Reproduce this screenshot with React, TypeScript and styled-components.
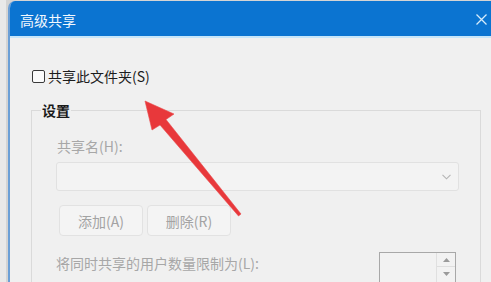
import React from "react";
import styled, { createGlobalStyle } from "styled-components";

const Global = createGlobalStyle`
  html, body { margin: 0; padding: 0; background: #e6e6e6; }
  body { width: 491px; height: 282px; overflow: hidden; }
  #root { width: 491px; height: 282px; }
  * { box-sizing: border-box; }
`;

const font = `"Noto Sans CJK SC", "Noto Sans", sans-serif`;

const Page = styled.div`
  position: relative;
  width: 491px;
  height: 282px;
  overflow: hidden;
  display: flex;
  padding: 1px 0 0 8px;
  background: linear-gradient(to right, #e9e9e9 0 6px, #d4d4d4 6px 8px);
  font-family: ${font};
`;

const Window = styled.div`
  flex: 1;
  margin-right: -20px;
  display: flex;
  flex-direction: column;
  border-left: 2px solid #6b9fd6;
  border-top-left-radius: 7px;
  overflow: hidden;
  background: #f0f0f0;
`;

const TitleBar = styled.div`
  height: 35px;
  flex: none;
  display: flex;
  align-items: center;
  justify-content: space-between;
  padding: 0 24px 0 10px;
  background: #0b74d1;
  border-bottom: 2px solid #c6e6fa;
  box-sizing: content-box;
`;

const Title = styled.span`
  color: #f2f8fe;
  font-size: 14px;
  line-height: 16px;
  margin-top: 2px;
`;

const Close = styled.svg`
  width: 11px;
  height: 11px;
  margin-top: 2px;
`;

const Body = styled.div`
  display: flex;
  flex-direction: column;
  padding: 30px 0 0 21px;
`;

const CheckRow = styled.label`
  display: flex;
  align-items: center;
  gap: 2px;
  padding-left: 1px;
  font-size: 14px;
  line-height: 16px;
  color: #1c1c1c;
`;

const Box = styled.span`
  width: 13px;
  height: 13px;
  border: 1px solid #3a3a3a;
  border-radius: 2px;
  background: #fbfbfb;
  margin-right: 1px;
`;

const Group = styled.div`
  position: relative;
  width: 450px;
  margin-top: 26px;
  border: 1px solid #dadada;
  border-bottom: none;
  padding: 27px 21px 0 24px;
  display: flex;
  flex-direction: column;
`;

const Legend = styled.span`
  position: absolute;
  top: -9px;
  left: 9px;
  padding: 0 1px;
  background: #f0f0f0;
  font-size: 14px;
  line-height: 16px;
  font-weight: 700;
  color: #1a1a1a;
`;

const Muted = styled.span<{ $indent?: number }>`
  font-size: 14px;
  line-height: 16px;
  color: #a7a7a7;
  padding-left: ${(p) => p.$indent ?? 0}px;
`;

const Combo = styled.div`
  margin-top: 8px;
  height: 29px;
  border: 1px solid #e1e1e1;
  border-radius: 3px;
  background: #f3f3f3;
  display: flex;
  align-items: center;
  justify-content: flex-end;
  padding-right: 7px;
`;

const ButtonRow = styled.div`
  display: flex;
  gap: 4px;
  margin: 14px 0 0 3px;
`;

const Button = styled.div`
  width: 84px;
  height: 31px;
  border: 1px solid #e2e2e2;
  border-radius: 4px;
  background: #f4f4f4;
  display: flex;
  align-items: center;
  justify-content: center;
  font-size: 14px;
  color: #a3a3a3;
`;

const LimitRow = styled.div`
  display: flex;
  justify-content: space-between;
  align-items: flex-start;
  margin-top: 16px;
  padding-right: 3px;
`;

const LimitText = styled(Muted)`
  margin-top: 3px;
`;

const Spinner = styled.div`
  width: 77px;
  height: 36px;
  border: 1px solid #a8a8a8;
  background: #f2f2f2;
  display: flex;
  justify-content: flex-end;
`;

const SpinButtons = styled.div`
  width: 19px;
  display: flex;
  flex-direction: column;
  border-left: 1px solid #e0e0e0;
`;

const SpinBtn = styled.div<{ $sep?: boolean }>`
  height: 14px;
  display: flex;
  align-items: center;
  justify-content: center;
  border-bottom: ${(p) => (p.$sep ? "1px solid #dedede" : "none")};
`;

const ArrowLayer = styled.svg`
  position: absolute;
  left: 0;
  top: 0;
  width: 491px;
  height: 282px;
  pointer-events: none;
`;

export default function App() {
  return (
    <>
      <Global />
      <Page>
        <Window>
          <TitleBar>
            <Title>高级共享</Title>
            <Close viewBox="0 0 11 11">
              <path d="M0.5 0.5 L10.5 10.5 M10.5 0.5 L0.5 10.5" stroke="#d6ebfb" strokeWidth="1.3" />
            </Close>
          </TitleBar>
          <Body>
            <CheckRow>
              <Box />
              共享此文件夹(S)
            </CheckRow>
            <Group>
              <Legend>设置</Legend>
              <Muted $indent={1}>共享名(H):</Muted>
              <Combo>
                <svg width="9" height="6" viewBox="0 0 9 6">
                  <path d="M0.5 0.8 L4.5 4.8 L8.5 0.8" fill="none" stroke="#b4b4b4" strokeWidth="1.1" />
                </svg>
              </Combo>
              <ButtonRow>
                <Button>添加(A)</Button>
                <Button>删除(R)</Button>
              </ButtonRow>
              <LimitRow>
                <LimitText>将同时共享的用户数量限制为(L):</LimitText>
                <Spinner>
                  <SpinButtons>
                    <SpinBtn $sep>
                      <svg width="7" height="4" viewBox="0 0 7 4">
                        <path d="M0 4 L3.5 0 L7 4 Z" fill="#9a9a9a" />
                      </svg>
                    </SpinBtn>
                    <SpinBtn>
                      <svg width="7" height="4" viewBox="0 0 7 4">
                        <path d="M0 0 L3.5 4 L7 0 Z" fill="#9a9a9a" />
                      </svg>
                    </SpinBtn>
                  </SpinButtons>
                </Spinner>
              </LimitRow>
            </Group>
          </Body>
        </Window>
        <ArrowLayer viewBox="0 0 491 282">
          <polygon
            points="145,101 174,114 166,119.5 241,214 238.5,216 160,125 152,130"
            fill="#e8383b"
            stroke="#ea4a4c"
            strokeWidth="0.6"
            strokeLinejoin="round"
          />
        </ArrowLayer>
      </Page>
    </>
  );
}
